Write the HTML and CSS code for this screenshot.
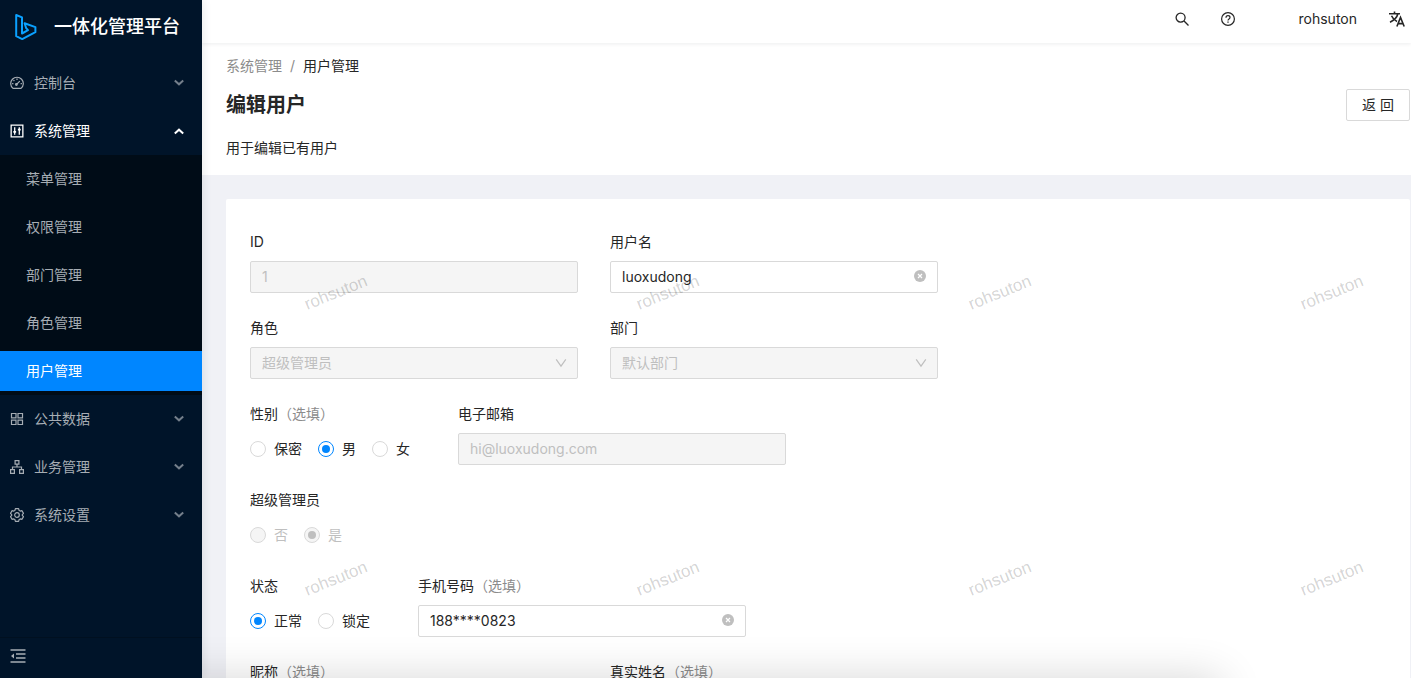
FILE: index.html
```html
<!DOCTYPE html>
<html lang="zh-CN">
<head>
<meta charset="utf-8">
<title>用户管理 - 一体化管理平台</title>
<link rel="stylesheet" href="styles.css">
</head>
<body>
<svg class="sprite" aria-hidden="true">
  <symbol id="chevron" viewBox="0 0 12 12"><path d="M1.800 3.500 6 7.300l4.200-3.800" fill="none" stroke="currentColor" stroke-width="2"/></symbol>
  <symbol id="down" viewBox="0 0 12 12"><path d="M1.200 2.400 6 9.200l4.800-6.800" fill="none" stroke="currentColor" stroke-width="1.200"/></symbol>
  <symbol id="clear" viewBox="0 0 12 12"><circle cx="6" cy="6" r="6" fill="currentColor"/><path d="m4 4 4 4m0-4-4 4" stroke="#fff" stroke-width="1.200"/></symbol>
</svg>
<div class="app">
  <aside class="sider">
    <a class="brand" href="#">
      <svg class="logo" viewBox="0 0 24 28" fill="none" stroke="#0aa1ff" stroke-width="2" stroke-linejoin="round"><path d="M2.200 2 8 4.400V20.500L14 17.200 12.200 15.200 10.600 10.200 21.400 14.100V19.200L8.200 26.100 2.200 23.200Z"/></svg>
      <span>一体化管理平台</span>
    </a>
    <nav class="menu">
      <button class="menu-title" type="button">
        <svg class="icon" viewBox="0 0 14 14" fill="none" stroke="currentColor" stroke-width="1.200"><path d="M3 12.400A6.300 6.300 0 1 1 11 12.400Z"/><path d="m6.300 8.700 3.500-3.600M7 2.600v1.300M3.500 4.100l.9.900M2.100 7.600h1.300M10.600 7.600h1.300"/><circle cx="6.400" cy="8.500" r=".8"/></svg>
        <span>控制台</span><svg class="arrow"><use href="#chevron"/></svg>
      </button>
      <button class="menu-title open" type="button">
        <svg class="icon" viewBox="0 0 14 14" fill="none" stroke="currentColor" stroke-width="1.300"><path d="M1.150 1.150h11.700v11.700H1.150Z"/><path d="M4.700 3.300v7.400M9.300 3.300v7.400"/><path d="M3.300 7.900h2.800M7.900 5.700h2.800" stroke-width="1.800"/></svg>
        <span>系统管理</span><svg class="arrow"><use href="#chevron"/></svg>
      </button>
      <div class="submenu">
        <a href="#">菜单管理</a>
        <a href="#">权限管理</a>
        <a href="#">部门管理</a>
        <a href="#">角色管理</a>
        <a class="selected" href="#">用户管理</a>
      </div>
      <button class="menu-title" type="button">
        <svg class="icon" viewBox="0 0 14 14" fill="none" stroke="currentColor" stroke-width="1.200"><path d="M1.500 1.500h4.500v4.300H1.500ZM8 1.500h4.500v4.300H8ZM1.500 8.200h4.500v4.300H1.500ZM8 8.200h4.500v4.300H8Z"/></svg>
        <span>公共数据</span><svg class="arrow"><use href="#chevron"/></svg>
      </button>
      <button class="menu-title" type="button">
        <svg class="icon" viewBox="0 0 14 14" fill="none" stroke="currentColor" stroke-width="1.200"><path d="M5.100.600h3.800v3.600H5.100ZM.600 9.700h3.800v3.600H.600ZM9.600 9.700h3.800v3.600H9.600ZM7 4.200v2.800M2.500 9.700V7h9v2.700"/></svg>
        <span>业务管理</span><svg class="arrow"><use href="#chevron"/></svg>
      </button>
      <button class="menu-title" type="button">
        <svg class="icon" viewBox="0 0 14 14" fill="none" stroke="currentColor" stroke-width="1.200" stroke-linejoin="round"><path d="M5.400.700h3.200l.5 1.700 1.200.7 1.700-.4 1.500 2.700L12.300 6.600v.8l1.200 1.200-1.500 2.700-1.700-.4-1.200.7-.5 1.700H5.400l-.5-1.700-1.200-.7-1.700.4L.500 8.600l1.200-1.200v-.8L.500 5.400 2 2.700l1.700.4 1.200-.7Z"/><circle cx="7" cy="7" r="2.300"/></svg>
        <span>系统设置</span><svg class="arrow"><use href="#chevron"/></svg>
      </button>
    </nav>
    <button class="collapse" type="button" aria-label="收起菜单">
      <svg viewBox="0 0 16 14" fill="none" stroke="currentColor" stroke-width="1.300"><path d="M.5 1h15M6 5h9.500M6 9h9.500M.5 13h15"/><path d="M4 4.500v5L1 7Z" fill="currentColor" stroke="none"/></svg>
    </button>
  </aside>

  <div class="main">
    <header class="topbar">
      <button type="button" aria-label="搜索"><svg class="icon" viewBox="0 0 14 14" fill="none" stroke="currentColor" stroke-width="1.300"><circle cx="5.600" cy="5.600" r="4.500"/><path d="m8.800 8.800 4.700 4.700"/></svg></button>
      <button type="button" aria-label="帮助"><svg class="icon" viewBox="0 0 14 14" fill="none" stroke="currentColor" stroke-width="1.200"><circle cx="7" cy="7" r="6.400"/><path d="M5 5.700C5 4.400 5.900 3.700 7 3.700s2 .7 2 1.800c0 1.500-2 1.500-2 3"/><path d="M7 9.500v1.200" stroke-width="1.300"/></svg></button>
      <a class="account" href="#">rohsuton</a>
      <button type="button" aria-label="切换语言"><svg class="lang" viewBox="0 0 16 16" fill="none" stroke="currentColor" stroke-width="1.600"><path d="M0 2.800h11M5.500.500v2.300M8.800 3C8 6.400 4.500 9.500 1 11.200M2.500 4.800C3.500 7.200 5.500 9.200 8 10.500"/><path d="m7.900 15.500 3.600-9 3.700 9M9 12.600h5"/></svg></button>
    </header>

    <section class="page-header">
      <nav class="breadcrumb" aria-label="面包屑"><a href="#">系统管理</a><span class="slash">/</span><span class="current">用户管理</span></nav>
      <div class="heading"><h1>编辑用户</h1><button class="back" type="button">返 回</button></div>
      <p>用于编辑已有用户</p>
    </section>

    <main class="content">
      <form class="card">
        <div class="row">
          <div class="field"><label for="uid">ID</label><div class="control"><input id="uid" type="text" value="1" disabled></div></div>
          <div class="field"><label for="uname">用户名</label><div class="control"><input id="uname" type="text" value="luoxudong"><svg class="suffix"><use href="#clear"/></svg></div></div>
        </div>
        <div class="row">
          <div class="field"><label for="role">角色</label><div class="control"><select id="role" disabled><option>超级管理员</option></select><svg class="suffix caret"><use href="#down"/></svg></div></div>
          <div class="field"><label for="dept">部门</label><div class="control"><select id="dept" disabled><option>默认部门</option></select><svg class="suffix caret"><use href="#down"/></svg></div></div>
        </div>
        <div class="row">
          <fieldset class="field"><legend>性别<span class="optional">（选填）</span></legend>
            <div class="radios">
              <label><input type="radio" name="gender">保密</label>
              <label><input type="radio" name="gender" checked>男</label>
              <label><input type="radio" name="gender">女</label>
            </div>
          </fieldset>
          <div class="field"><label for="email">电子邮箱</label><div class="control"><input id="email" type="text" value="hi@luoxudong.com" disabled></div></div>
        </div>
        <div class="row">
          <fieldset class="field"><legend>超级管理员</legend>
            <div class="radios">
              <label class="off"><input type="radio" name="super" disabled>否</label>
              <label class="off"><input type="radio" name="super" checked disabled>是</label>
            </div>
          </fieldset>
        </div>
        <div class="row">
          <fieldset class="field"><legend>状态</legend>
            <div class="radios">
              <label><input type="radio" name="status" checked>正常</label>
              <label><input type="radio" name="status">锁定</label>
            </div>
          </fieldset>
          <div class="field"><label for="phone">手机号码<span class="optional">（选填）</span></label><div class="control"><input id="phone" type="text" value="188****0823"><svg class="suffix"><use href="#clear"/></svg></div></div>
        </div>
        <div class="row">
          <div class="field"><label for="nick">昵称<span class="optional">（选填）</span></label><div class="control"><input id="nick" type="text"></div></div>
          <div class="field"><label for="real">真实姓名<span class="optional">（选填）</span></label><div class="control"><input id="real" type="text"></div></div>
        </div>
      </form>
      <div class="watermark" aria-hidden="true">
        <span>rohsuton</span><span>rohsuton</span><span>rohsuton</span><span>rohsuton</span>
        <span>rohsuton</span><span>rohsuton</span><span>rohsuton</span><span>rohsuton</span>
      </div>
    </main>
    <div class="bottom-shadow"></div>
  </div>
</div>
</body>
</html>
```
FILE: styles.css
```css
*, *::before, *::after { box-sizing: border-box; }

body {
  margin: 0;
  font: 14px/22px Inter, "Noto Sans CJK SC", sans-serif;
  color: #262626;
}

button, input, select { font: inherit; color: inherit; }
button { padding: 0; border: 0; background: none; cursor: pointer; }
a { color: inherit; text-decoration: none; }
svg { display: block; flex: none; }
.sprite { position: absolute; width: 0; height: 0; }
.icon { width: 14px; height: 14px; }

.app { display: flex; height: 100vh; overflow: hidden; background: #f0f1f6; }

/* Sidebar */
.sider {
  display: flex;
  flex-direction: column;
  flex: none;
  width: 202px;
  background: #001429;
  color: #a6adb4;
  box-shadow: 2px 0 8px rgba(29, 35, 41, .08);
  z-index: 2;
}
.brand {
  display: flex;
  align-items: center;
  gap: 16px;
  height: 54px;
  padding-left: 14px;
  margin-bottom: 5px;
  color: #fff;
  font-size: 18px;
  font-weight: 500;
}
.logo { width: 24px; height: 28px; }
.menu { flex: 1; }
.menu-title {
  display: flex;
  align-items: center;
  gap: 10px;
  width: 100%;
  height: 48px;
  padding: 0 17px 0 10px;
  text-align: left;
}
.menu-title span { flex: 1; }
.arrow { width: 12px; height: 12px; color: #747f8b; }
.open { color: #fff; }
.open .arrow { color: #fff; transform: rotate(180deg); }
.submenu { padding: 4px 0; background: #000c17; display: grid; gap: 8px; }
.submenu a { padding: 0 26px; line-height: 40px; }
.submenu .selected { background: #0086ff; color: #fff; }
.collapse {
  display: flex;
  align-items: center;
  height: 41px;
  padding: 0 10px 4px;
  border-top: 1px solid #001020;
}
.collapse svg { width: 16px; height: 14px; }

/* Top bar */
.main { position: relative; display: flex; flex-direction: column; flex: 1; min-width: 0; }
.topbar {
  display: flex;
  align-items: center;
  justify-content: flex-end;
  flex: none;
  height: 43px;
  padding: 0 6px 5px 24px;
  background: #fff;
  box-shadow: 0 1px 4px rgba(0, 21, 41, .08);
  z-index: 1;
}
.topbar button:nth-child(2) { margin-left: 32px; }
.account { margin: 0 32px 0 64px; }
.lang { width: 16px; height: 16px; }

/* Page header */
.page-header { flex: none; padding: 12px 1px 16px 24px; background: #fff; }
.breadcrumb { color: #8c8c8c; }
.slash { margin: 0 8px; }
.current { color: #262626; }
.heading { display: flex; justify-content: space-between; margin: 12px 0 16px; }
.heading h1 { margin: 0; font-size: 20px; line-height: 32px; font-weight: 600; }
.back { width: 64px; height: 32px; border: 1px solid #d9d9d9; border-radius: 2px; background: #fff; }
.page-header p { margin: 0; }

/* Form */
.content { position: relative; flex: 1; min-height: 0; padding: 24px 1px 0 24px; overflow: hidden; }
.card { padding: 32px 24px; border-radius: 2px; background: #fff; }
.row { display: flex; gap: 32px; margin-bottom: 24px; }
.field { display: flex; flex-direction: column; gap: 8px; min-width: 0; margin: 0; padding: 0; border: 0; }
fieldset.field { display: block; }
legend { padding: 0; margin-bottom: 8px; }
.optional { color: #8c8c8c; }
.control { position: relative; width: 328px; }
.control input, .control select {
  display: block;
  width: 100%;
  height: 32px;
  padding: 4px 11px;
  border: 1px solid #d9d9d9;
  border-radius: 2px;
  background: #fff;
  appearance: none;
  opacity: 1;
}
.control input { padding: 3px 11px 5px; }
.control input:disabled, .control select:disabled { background: #f5f5f5; color: #bfbfbf; }
.suffix { position: absolute; right: 12px; top: 9px; width: 12px; height: 12px; color: #bfbfbf; }
.caret { right: 11px; top: 10px; }
.radios { display: flex; height: 32px; }
.radios label { display: flex; align-items: center; gap: 8px; margin-right: 16px; }
.radios .off { color: #bfbfbf; }
.radios input {
  display: grid;
  place-content: center;
  width: 16px;
  height: 16px;
  margin: 0;
  border: 1px solid #d9d9d9;
  border-radius: 50%;
  background: #fff;
  appearance: none;
}
.radios input:checked { border-color: #0086ff; }
.radios input:checked::before { content: ""; width: 8px; height: 8px; border-radius: 50%; background: #0086ff; }
.radios input:disabled { border-color: #d9d9d9; background: #f5f5f5; }
.radios input:disabled::before { background: #bfbfbf; }

/* Overlays */
.watermark {
  position: absolute;
  inset: 0;
  display: grid;
  grid-template-columns: repeat(4, 332px);
  grid-auto-rows: 286px;
  overflow: hidden;
  pointer-events: none;
  font: 17px/22px "Liberation Sans", sans-serif;
  color: rgba(0, 0, 0, .18);
}
.watermark span { place-self: center; margin: 0 64px 50px 0; transform: rotate(-22deg); }
.bottom-shadow {
  position: absolute;
  top: 100%;
  left: -100px;
  right: 190px;
  height: 60px;
  box-shadow: 0 0 44px rgba(0, 0, 0, .16);
  pointer-events: none;
}
```
